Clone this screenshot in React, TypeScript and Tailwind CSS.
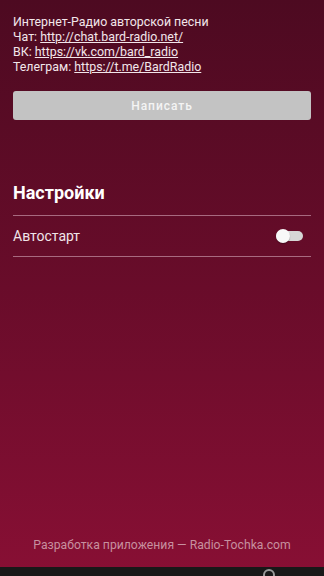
import React from "react";

export default function App() {
  return (
    <div
      className="w-[324px] h-[576px] flex flex-col overflow-hidden bg-gradient-to-b from-[#4d0a21] via-[#690c2a] to-[#880f34] text-white"
      style={{ fontFamily: "Roboto, 'Noto Sans', sans-serif" }}
    >
      <div className="flex-1 flex flex-col px-[13px]">
        <div className="pt-[14px] text-[12.4px] leading-[15px] text-[#f2e6ea]">
          <div>Интернет-Радио авторской песни</div>
          <div>
            Чат: <span className="underline">http://chat.bard-radio.net/</span>
          </div>
          <div>
            ВК: <span className="underline">https://vk.com/bard_radio</span>
          </div>
          <div>
            Телеграм: <span className="underline">https://t.me/BardRadio</span>
          </div>
        </div>
        <div className="mt-[17px] h-[29px] rounded-[3px] bg-[#c3c3c3] flex items-center justify-center text-[12px] font-medium tracking-[0.08em] text-[#f4f4f4]">
          Написать
        </div>
        <div className="mt-[62px] text-[18px] font-bold leading-[22px]">Настройки</div>
        <div className="mt-[11px] h-px bg-[#a86a80]" />
        <div className="h-[40px] flex items-center justify-between">
          <span className="text-[14px] text-[#f0e4e8]">Автостарт</span>
          <div className="relative w-[27px] h-[14px] mr-[8px] flex items-center">
            <div className="w-full h-[10px] rounded-full bg-[#d6d6d6]" />
            <div className="absolute left-0 top-0 w-[14px] h-[14px] rounded-full bg-[#f8f8f8] shadow-[0_1px_1px_rgba(0,0,0,0.3)]" />
          </div>
        </div>
        <div className="h-px bg-[#a86a80]" />
        <div className="flex-1" />
        <div className="text-center text-[12.2px] text-[#c7909f] mb-[13px]">
          Разработка приложения — Radio-Tochka.com
        </div>
      </div>
      <div className="h-[9px] bg-[#181818] relative">
        <div className="absolute left-[263px] top-[2px] w-[12px] h-[12px] rounded-full border-2 border-[#9a9a9a]" />
      </div>
    </div>
  );
}
